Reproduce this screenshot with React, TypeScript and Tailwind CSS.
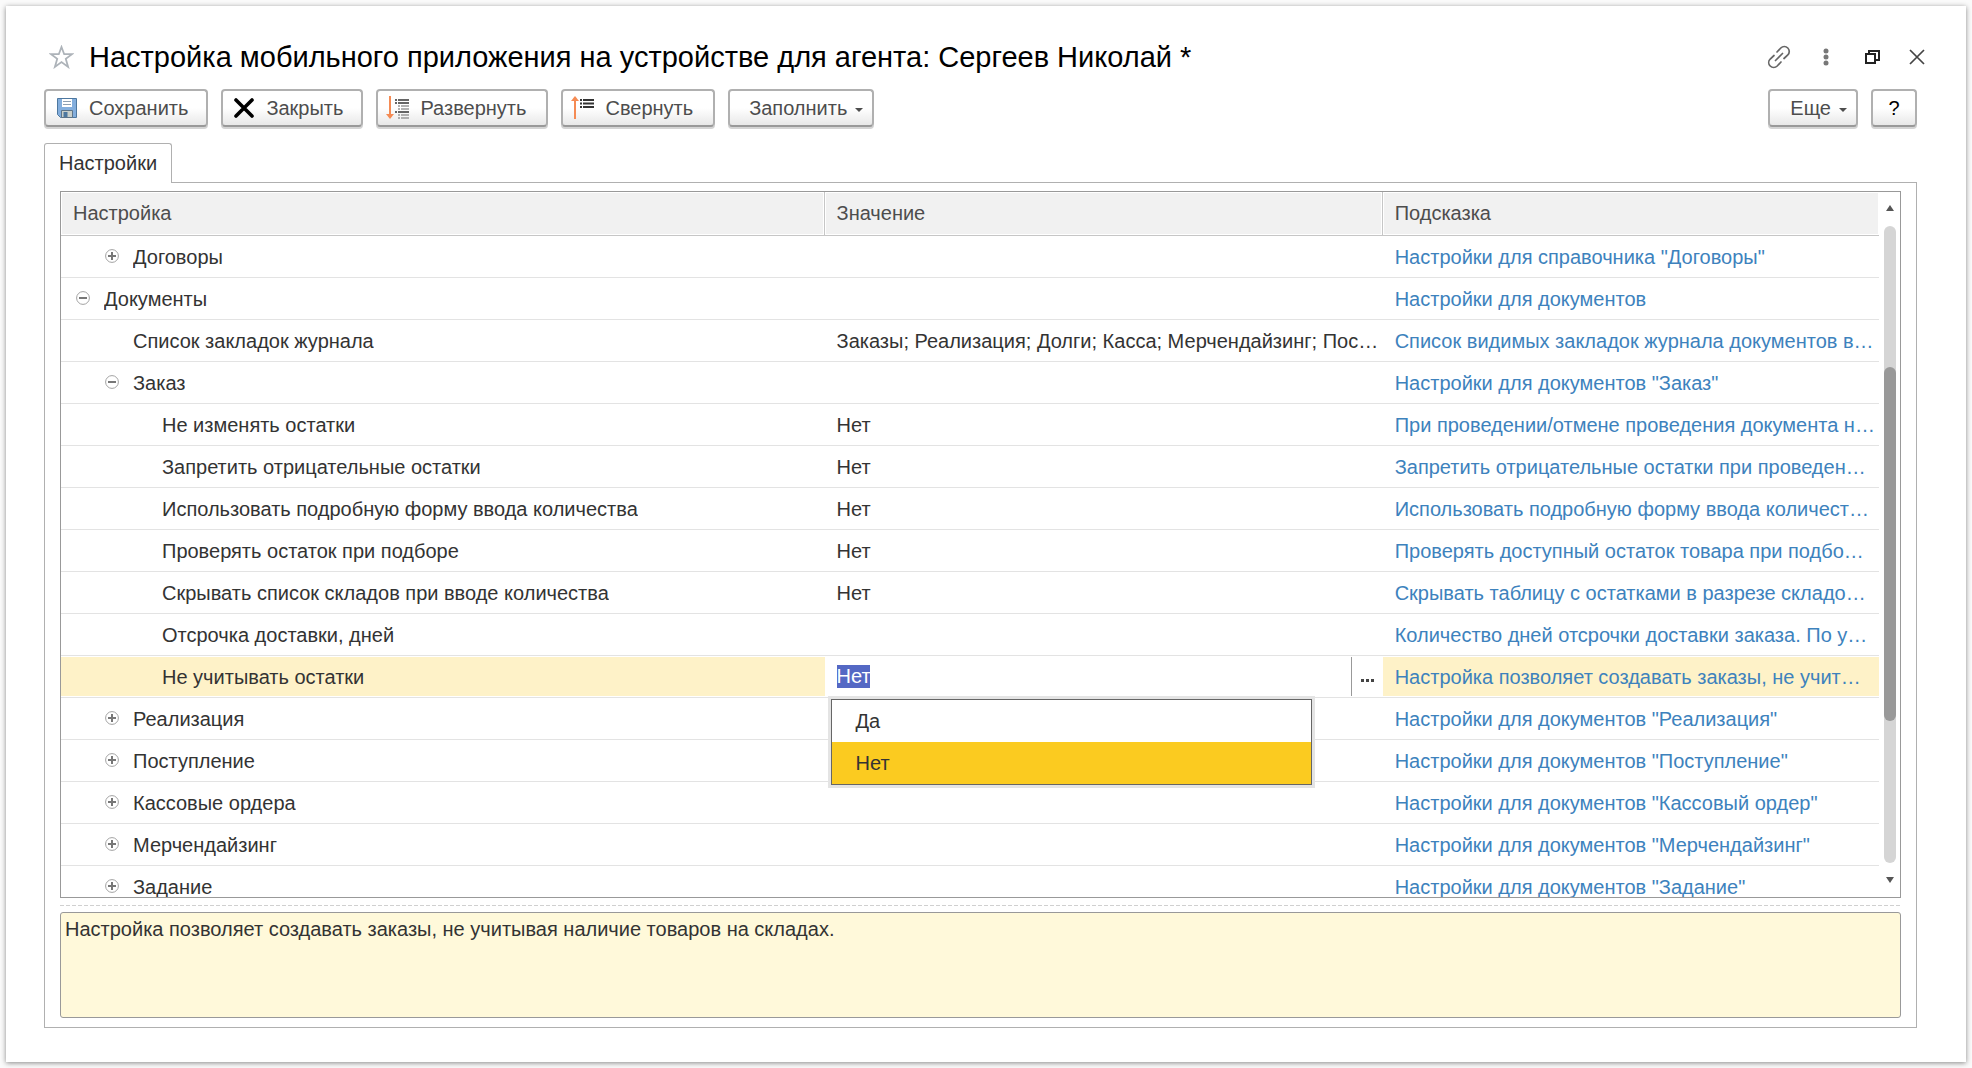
import React, { useState } from "react";

type Row = {
  name: string;
  level: 0 | 1 | 2;
  state?: "open" | "closed";
  value?: string;
  hint: string;
  editing?: boolean;
};

const rows: Row[] = [
  { name: "Договоры", level: 1, state: "closed", hint: 'Настройки для справочника "Договоры"' },
  { name: "Документы", level: 0, state: "open", hint: "Настройки для документов" },
  {
    name: "Список закладок журнала",
    level: 1,
    value: "Заказы; Реализация; Долги; Касса; Мерчендайзинг; Пос…",
    hint: "Список видимых закладок журнала документов в…",
  },
  { name: "Заказ", level: 1, state: "open", hint: 'Настройки для документов "Заказ"' },
  { name: "Не изменять остатки", level: 2, value: "Нет", hint: "При проведении/отмене проведения документа н…" },
  { name: "Запретить отрицательные остатки", level: 2, value: "Нет", hint: "Запретить отрицательные остатки при проведен…" },
  { name: "Использовать подробную форму ввода количества", level: 2, value: "Нет", hint: "Использовать подробную форму ввода количест…" },
  { name: "Проверять остаток при подборе", level: 2, value: "Нет", hint: "Проверять доступный остаток товара при подбо…" },
  { name: "Скрывать список складов при вводе количества", level: 2, value: "Нет", hint: "Скрывать таблицу с остатками в разрезе складо…" },
  { name: "Отсрочка доставки, дней", level: 2, hint: "Количество дней отсрочки доставки заказа. По у…" },
  { name: "Не учитывать остатки", level: 2, value: "Нет", hint: "Настройка позволяет создавать заказы, не учит…", editing: true },
  { name: "Реализация", level: 1, state: "closed", hint: 'Настройки для документов "Реализация"' },
  { name: "Поступление", level: 1, state: "closed", hint: 'Настройки для документов "Поступление"' },
  { name: "Кассовые ордера", level: 1, state: "closed", hint: 'Настройки для документов "Кассовый ордер"' },
  { name: "Мерчендайзинг", level: 1, state: "closed", hint: 'Настройки для документов "Мерчендайзинг"' },
  { name: "Задание", level: 1, state: "closed", hint: 'Настройки для документов "Задание"' },
];

const indent = { 0: "pl-[15px]", 1: "pl-[44px]", 2: "pl-[73px]" };

function ToolButton({ className = "", children, ...rest }: React.ButtonHTMLAttributes<HTMLButtonElement>) {
  return (
    <button
      type="button"
      {...rest}
      className={`flex h-[38px] shrink-0 items-center rounded-[4px] border-2 border-[#b0b0b0] border-b-[#999] bg-linear-to-b from-white from-50% to-[#e8e8e8] text-xl text-[#4d4d4d] shadow-[0_2px_0_#d4d4d4] ${className}`}
    >
      {children}
    </button>
  );
}

function Caret() {
  return (
    <svg width="8" height="4" viewBox="0 0 8 4" className="mt-1" aria-hidden="true">
      <path d="M0 0h8L4 4z" fill="#4d4d4d" />
    </svg>
  );
}

function Toggle({ open, name }: { open: boolean; name: string }) {
  return (
    <button type="button" aria-label={name} aria-expanded={open} className="mr-[14px] shrink-0">
      <svg width="14" height="14" viewBox="0 0 14 14" fill="none" className="mb-[2px]">
        <circle cx="7" cy="7" r="6.4" stroke="#a3a3a3" strokeWidth="1" />
        <path d={open ? "M3 7h8" : "M3 7h8M7 3v8"} stroke="#777" strokeWidth="2" />
      </svg>
    </button>
  );
}

function SaveIcon() {
  return (
    <svg width="20" height="20" viewBox="0 0 20 20" aria-hidden="true">
      <path d="M.5.5h19v19H3.500l-3-3z" fill="#83aedd" stroke="#4d779f" />
      <path d="M5 1h10v8H5z" fill="#fff" />
      <path d="M6 3.500h8M6 6.500h8" stroke="#8d9fb2" />
      <path d="M4.500 12.500h11v7h-11z" fill="#c9cfca" stroke="#5d7489" />
      <path d="M6.500 14h4v5h-4z" fill="#4d779f" />
    </svg>
  );
}

function CrossIcon() {
  return (
    <svg width="20" height="20" viewBox="0 0 20 20" aria-hidden="true">
      <path d="M2 2l16 16M18 2L2 18" stroke="#000" strokeWidth="3.600" strokeLinecap="round" />
    </svg>
  );
}

function ExpandIcon() {
  return (
    <svg width="24" height="24" viewBox="0 0 24 24" fill="none" aria-hidden="true">
      <path d="M4 0v19" stroke="#f58b54" strokeWidth="2" />
      <path d="M0 18h8l-4 5z" fill="#f58b54" />
      <path d="M9 4h2M12 4h11M9 7h2M12 7h11M9 16h2M12 16h11" stroke="#333" strokeWidth="1.600" />
      <path d="M12 10h2M15 10h8M12 13h2M15 13h8M12 19h2M15 19h8M12 22h2M15 22h8" stroke="#999" strokeWidth="1.600" />
    </svg>
  );
}

function CollapseIcon() {
  return (
    <svg width="24" height="24" viewBox="0 0 24 24" fill="none" aria-hidden="true">
      <path d="M4 4v19" stroke="#f58b54" strokeWidth="2" />
      <path d="M0 5h8L4 0z" fill="#f58b54" />
      <path d="M9 4h2M12 4h11M9 7.500h2M12 7.500h11M9 11h2M12 11h11" stroke="#333" strokeWidth="1.800" />
    </svg>
  );
}

function ValueEditor({ value }: { value: string }) {
  const [text, setText] = useState(value);
  return (
    <div className="relative flex h-[41px] items-center bg-white">
      <div className="min-w-0 flex-1 pl-3">
        <input
          aria-label="Значение"
          value={text}
          onChange={(e) => setText(e.target.value)}
          className="block h-[23px] w-[33px] bg-[#5468c4] text-xl leading-[23px] text-white outline-none"
        />
      </div>
      <button type="button" aria-label="Выбрать" className="flex h-[39px] w-[32px] items-center justify-center gap-[2px] border-l border-[#999] pt-2">
        <i className="size-[3px] bg-[#444]" />
        <i className="size-[3px] bg-[#444]" />
        <i className="size-[3px] bg-[#444]" />
      </button>
      <ul
        role="listbox"
        aria-label="Варианты значения"
        className="absolute top-[43px] right-[71px] left-[6px] z-10 border border-[#666] bg-white shadow-[0_0_0_3px_#e4e4e4]"
      >
        <li role="option" aria-selected="false" className="flex h-[42px] items-center pl-6">Да</li>
        <li role="option" aria-selected="true" className="flex h-[42px] items-center bg-[#fbcb20] pl-6">Нет</li>
      </ul>
    </div>
  );
}

function SettingsTable() {
  const head = "border-b border-[#c6c6c6] bg-[#f1f1f1] p-0 pb-[2px] pl-3 text-left font-normal shadow-[inset_0_0_0_1px_#fff]";
  return (
    <table className="w-full table-fixed border-separate border-spacing-0 text-xl text-[#333]">
      <colgroup>
        <col className="w-[42%]" />
        <col className="w-[30.7%]" />
        <col />
      </colgroup>
      <thead>
        <tr className="h-11 text-[#4d4d4d]">
          <th scope="col" className={`${head} border-r`}>Настройка</th>
          <th scope="col" className={`${head} border-r`}>Значение</th>
          <th scope="col" className={head}>Подсказка</th>
        </tr>
      </thead>
      <tbody>
        {rows.map((row) => {
          const cell = `h-[42px] border-b border-[#e3e3e3] p-0 ${row.editing ? "bg-[#fef2c8] shadow-[inset_0_1px_#fff,inset_0_-1px_#fff]" : ""}`;
          return (
            <tr key={row.name}>
              <td className={cell}>
                <div className={`flex items-center ${indent[row.level]}`}>
                  {row.state && <Toggle open={row.state === "open"} name={row.name} />}
                  <span className={`truncate ${row.state ? "" : "pl-7"}`}>{row.name}</span>
                </div>
              </td>
              <td className={cell}>
                {row.editing ? (
                  <ValueEditor value={row.value ?? ""} />
                ) : (
                  <div className="truncate pl-3">{row.value}</div>
                )}
              </td>
              <td className={cell}>
                <div className="truncate pl-3 text-[#3d82bd]">{row.hint}</div>
              </td>
            </tr>
          );
        })}
      </tbody>
    </table>
  );
}

function ScrollBar() {
  return (
    <div className="flex w-[21px] shrink-0 flex-col items-center pt-[13px] pb-[14px]" aria-hidden="true">
      <svg width="8" height="6" viewBox="0 0 8 6"><path d="M0 6h8L4 0z" fill="#555" /></svg>
      <div className="mt-[15px] mb-[14px] w-3 flex-1 rounded-full bg-[#d5d5d5] pt-[141px]">
        <div className="h-[354px] rounded-full bg-[#999]" />
      </div>
      <svg width="8" height="6" viewBox="0 0 8 6"><path d="M0 0h8L4 6z" fill="#555" /></svg>
    </div>
  );
}

export default function App() {
  return (
    <div className="h-screen bg-[#fafafa] p-[6px] font-['Liberation_Sans',Arial,sans-serif]">
      <main className="flex h-full flex-col bg-white pr-[49px] pb-[34px] pl-[38px] shadow-[0_1px_5px_#888]">
        <header className="flex h-[83px] shrink-0 items-center pt-[18px]">
          <button type="button" aria-label="В избранное" className="ml-[5px]">
            <svg width="25" height="24" viewBox="0 0 25 24" fill="none" stroke="#adb3b9" strokeWidth="1.800">
              <path d="M12.500 2l2.700 7.200h7.800l-6.200 4.700 2.300 8-6.600-4.800-6.600 4.800 2.300-8L2 9.200h7.800z" />
            </svg>
          </button>
          <h1 className="ml-[15px] flex-1 truncate text-[29px] leading-9 text-black">
            Настройка мобильного приложения на устройстве для агента: Сергеев Николай *
          </h1>
          <div className="-mr-2 flex items-center">
            <button type="button" aria-label="Получить ссылку">
              <svg width="24" height="24" viewBox="0 0 24 24" fill="none" stroke="#666" strokeWidth="1.700" strokeLinecap="round">
                <path d="M10 7l3.800-4a4.900 4.900 0 0 1 7 7L17 13.500M14 17l-3.800 4a4.900 4.900 0 0 1-7-7L7 10.500M8.500 15.500l7-7" />
              </svg>
            </button>
            <button type="button" aria-label="Меню" className="ml-8">
              <svg width="6" height="18" viewBox="0 0 6 18" fill="#777">
                <circle cx="3" cy="3" r="2.500" /><circle cx="3" cy="9" r="2.500" /><circle cx="3" cy="15" r="2.500" />
              </svg>
            </button>
            <button type="button" aria-label="Развернуть окно" className="ml-9">
              <svg width="15" height="14" viewBox="0 0 15 14" fill="none" stroke="#222" strokeWidth="2">
                <path d="M1 4h9v9H1zM4 4V1h10v9h-4" />
              </svg>
            </button>
            <button type="button" aria-label="Закрыть окно" className="ml-[29px]">
              <svg width="16" height="16" viewBox="0 0 16 16" fill="none" stroke="#444" strokeWidth="1.700">
                <path d="M1 1l14 14M15 1L1 15" />
              </svg>
            </button>
          </div>
        </header>

        <div className="flex shrink-0 gap-[13px]">
          <ToolButton className="gap-3 pr-[18px] pl-[11px]"><SaveIcon />Сохранить</ToolButton>
          <ToolButton className="gap-3 pr-[18px] pl-[11px]"><CrossIcon />Закрыть</ToolButton>
          <ToolButton className="gap-[10px] pr-5 pl-2"><ExpandIcon />Развернуть</ToolButton>
          <ToolButton className="gap-[10px] pr-5 pl-2"><CollapseIcon />Свернуть</ToolButton>
          <ToolButton className="mr-auto gap-2 pr-[9px] pl-[19px]">Заполнить<Caret /></ToolButton>
          <ToolButton className="gap-2 pr-[9px] pl-5">Еще<Caret /></ToolButton>
          <ToolButton className="w-[46px] justify-center text-black" aria-label="Справка">?</ToolButton>
        </div>

        <div role="tablist" className="mt-4 flex shrink-0">
          <button
            type="button"
            role="tab"
            aria-selected="true"
            className="z-10 -mb-px h-10 rounded-t-[3px] border border-b-0 border-[#b0b0b0] bg-white px-[14px] pb-[2px] text-xl text-[#333]"
          >
            Настройки
          </button>
        </div>

        <section role="tabpanel" aria-label="Настройки" className="flex min-h-0 flex-1 flex-col border border-[#b0b0b0] px-[15px] pt-2 pb-[9px]">
          <div className="flex min-h-0 flex-1 overflow-hidden border border-[#999]">
            <div className="min-w-0 flex-1 overflow-hidden"><SettingsTable /></div>
            <ScrollBar />
          </div>
          <div className="mt-[7px] mb-[6px] h-px shrink-0 bg-[repeating-linear-gradient(90deg,#d0d0d0_0_4px,transparent_4px_6px)]" />
          <textarea
            readOnly
            aria-label="Описание настройки"
            className="h-[106px] shrink-0 resize-none rounded-[3px] border border-[#999] bg-[#fff9da] px-1 py-1 text-xl leading-6 text-[#333] outline-none"
            value="Настройка позволяет создавать заказы, не учитывая наличие товаров на складах."
          />
        </section>
      </main>
    </div>
  );
}
